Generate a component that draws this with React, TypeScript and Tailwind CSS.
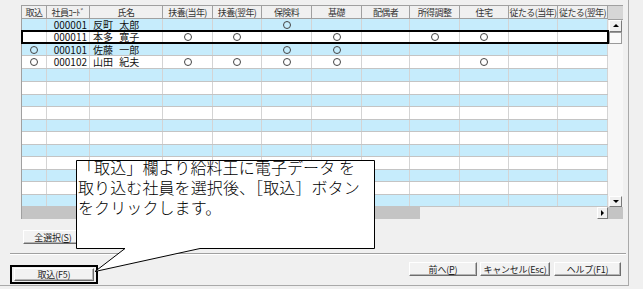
import React from "react";

const FONT = { fontFamily: '"Noto Sans CJK JP", "Noto Sans", sans-serif' };

const COLS = [
  { label: "取込", w: "w-[25px]" },
  { label: "社員ｺｰﾄﾞ", w: "w-[43px]" },
  { label: "氏名", w: "w-[73px]" },
  { label: "扶養(当年)", w: "w-[50px]" },
  { label: "扶養(翌年)", w: "w-[49px]" },
  { label: "保険料", w: "w-[50px]" },
  { label: "基礎", w: "w-[50px]" },
  { label: "配偶者", w: "w-[48px]" },
  { label: "所得調整", w: "w-[50px]" },
  { label: "住宅", w: "w-[49px]" },
  { label: "従たる(当年)", w: "w-[49px]" },
  { label: "従たる(翌年)", w: "w-[50px]" },
];

const EMPLOYEES = [
  { code: "000001", name: "反町 太郎", marks: [5] },
  { code: "000011", name: "本多 寛子", marks: [3, 4, 6, 8, 9], selected: true },
  { code: "000101", name: "佐藤 一郎", marks: [0, 5, 6] },
  { code: "000102", name: "山田 紀夫", marks: [0, 3, 4, 5, 6, 9] },
];

// row heights alternate a bit so the lines land where the screenshot has them
const ROW_H = ["h-[12px]", "h-[13px]", "h-[12px]", "h-[13px]", "h-[13px]", "h-[13px]", "h-[12px]", "h-[13px]", "h-[12px]", "h-[13px]", "h-[12px]", "h-[13px]", "h-[12px]", "h-[13px]", "h-[12px]"];

function Mark() {
  return <span className="block w-[8px] h-[8px] rounded-full border border-[#444]" />;
}

function WinButton({ children, className = "" }: { children: React.ReactNode; className?: string }) {
  return (
    <div
      className={`flex items-center justify-center whitespace-nowrap bg-[#f2f2f2] border border-t-white border-l-white border-r-[#6d6d6d] border-b-[#6d6d6d] shadow-[inset_-1px_-1px_0_#b4b4b4] text-[9px] leading-none text-[#222] tracking-[-0.2px] ${className}`}
    >
      {children}
    </div>
  );
}

function ArrowButton({ dir, className = "" }: { dir: "up" | "down" | "right"; className?: string }) {
  const pts = dir === "up" ? "1,5 4,2 7,5" : dir === "down" ? "1,2 4,5 7,2" : "2,1 5,4 2,7";
  return (
    <div className={`flex items-center justify-center bg-[#f0f0f0] border border-t-white border-l-white border-r-[#7a7a7a] border-b-[#7a7a7a] ${className}`}>
      <svg width="8" height="8" viewBox="0 0 8 8">
        <polygon points={pts} fill="#000" />
      </svg>
    </div>
  );
}

function Grid() {
  return (
    <div className="flex w-[602px] h-[214px] border-l border-t border-[#a0a0a0] bg-[#f0f0f0]">
      <div className="flex flex-col w-[586px]">
        {/* header */}
        <div className="flex h-[13px] bg-[#f0f0f0] border-b border-[#a0a0a0]">
          {COLS.map((c) => (
            <div
              key={c.label}
              className={`${c.w} shrink-0 border-r border-[#a0a0a0] flex items-center justify-center text-[9px] leading-none text-[#333] whitespace-nowrap tracking-[-0.6px]`}
            >
              {c.label}
            </div>
          ))}
        </div>
        {/* rows */}
        {ROW_H.map((h, i) => {
          const emp = EMPLOYEES[i];
          const bg = i % 2 === 0 ? "bg-[#c6ecfc]" : "bg-white";
          return (
            <div key={i} className={`relative flex ${h} ${bg} border-b border-[#c4c4c4]`}>
              {COLS.map((c, ci) => (
                <div
                  key={ci}
                  className={`${c.w} shrink-0 border-r border-[#d4d4d4] flex items-center text-[10px] leading-none text-[#111] whitespace-pre ${
                    ci === 1 ? "justify-end pr-[2px] text-[9px]" : ci === 2 ? "justify-start pl-[3px] [word-spacing:4px]" : "justify-center"
                  }`}
                >
                  {emp && ci === 1 && emp.code}
                  {emp && ci === 2 && emp.name}
                  {emp && emp.marks.includes(ci) && <Mark />}
                </div>
              ))}
              {emp?.selected && <div className="absolute -left-[1px] -right-[1px] -top-[1px] -bottom-[1px] border-2 border-black" />}
            </div>
          );
        })}
        {/* horizontal scrollbar */}
        <div className="flex h-[12px]">
          <div className="w-[398px] bg-[#c4c4c4]" />
          <div className="flex-1 bg-[#f0f0f0]" />
          <ArrowButton dir="right" className="w-[11px]" />
        </div>
      </div>
      {/* vertical scrollbar */}
      <div className="flex flex-col w-[15px]">
        <div className="h-[14px] bg-[#d6d6d6] border-b border-[#a0a0a0]" />
        <ArrowButton dir="up" className="h-[12px] w-[13px] ml-[1px]" />
        <div className="h-[12px] w-[13px] ml-[1px] bg-[#fafafa] border border-[#9a9a9a]" />
        <div className="flex-1 bg-[#f7f7f7]" />
        <ArrowButton dir="down" className="h-[11px] w-[13px] ml-[1px]" />
        <div className="h-[12px] bg-[#c4c4c4]" />
      </div>
    </div>
  );
}

function Callout() {
  return (
    <div className="absolute left-0 top-0 w-[643px] h-[289px] pointer-events-none">
      <svg className="absolute left-0 top-0" width="643" height="289">
        <path d="M76.5 160.5 H374.5 V248.5 H200 L95 271.5 L125 248.5 H76.5 Z" fill="#fff" stroke="#000" strokeWidth="1" />
      </svg>
      <div className="absolute left-[78px] top-[157px] w-[295px] text-[16px] leading-[20px] font-light text-black tracking-[0.1px] whitespace-nowrap">
        <div>「取込」欄より給料王に電子データ を</div>
        <div>取り込む社員を選択後、［取込］ボタン</div>
        <div>をクリックします。</div>
      </div>
    </div>
  );
}

export default function App() {
  return (
    <div className="relative w-[643px] h-[289px] bg-[#f0f0f0] overflow-hidden" style={FONT}>
      <div className="w-[629px] h-[286px] border-r border-b border-[#a9a9a9] flex flex-col">
        <div className="pl-[21px] pt-[5px]">
          <Grid />
        </div>
        <div className="pl-[23px] mt-[11px]">
          <WinButton className="w-[60px] h-[14px]">
            全選択(<span className="underline">S</span>)
          </WinButton>
        </div>
        <div className="ml-[10px] mr-[2px] mt-[9px] h-[2px] border-t border-[#a0a0a0] border-b border-b-white" />
        <div className="flex items-start mt-[7px]">
          <div className="ml-[10px] mt-[3px] w-[88px] h-[19px] border-2 border-black flex items-center justify-center">
            <WinButton className="w-[80px] h-[13px]">取込(F5)</WinButton>
          </div>
          <div className="flex ml-[311px] gap-[3px]">
            <WinButton className="w-[68px] h-[14px]">
              前へ(<span className="underline">P</span>)
            </WinButton>
            <WinButton className="w-[70px] h-[14px]">キャンセル(Esc)</WinButton>
            <WinButton className="w-[67px] h-[14px] ml-[1px]">ヘルプ(F1)</WinButton>
          </div>
        </div>
      </div>
      <Callout />
    </div>
  );
}
